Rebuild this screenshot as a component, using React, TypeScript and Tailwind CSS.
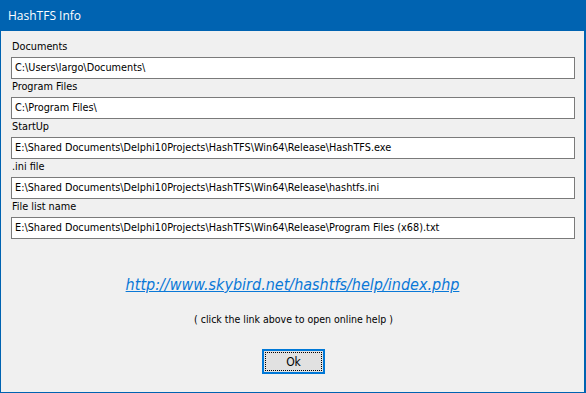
import React from 'react'

const fields = [
  { label: 'Documents', value: 'C:\\Users\\largo\\Documents\\' },
  { label: 'Program Files', value: 'C:\\Program Files\\' },
  { label: 'StartUp', value: 'E:\\Shared Documents\\Delphi10Projects\\HashTFS\\Win64\\Release\\HashTFS.exe' },
  { label: '.ini file', value: 'E:\\Shared Documents\\Delphi10Projects\\HashTFS\\Win64\\Release\\hashtfs.ini' },
  { label: 'File list name', value: 'E:\\Shared Documents\\Delphi10Projects\\HashTFS\\Win64\\Release\\Program Files (x68).txt' },
]

export default function App() {
  return (
    <div className="w-[586px] h-[393px] flex flex-col bg-[#0063b1] pl-px pr-[2px] pb-px font-['DejaVu_Sans_Condensed','DejaVu_Sans',sans-serif] text-black">
      <div className="h-[31px] shrink-0 flex items-center pl-[8px] -ml-px text-white text-[12px] font-['Open_Sans',sans-serif]">
        HashTFS Info
      </div>
      <div className="flex-1 bg-[#f0f0f0] flex flex-col px-[10px] pt-[8px]">
        {fields.map((f) => (
          <div key={f.label} className="flex flex-col">
            <div className="h-[15px] text-[10.8px] leading-[15px] pl-px">{f.label}</div>
            <div className="mt-[3px] h-[22px] w-[564px] border border-[#7a7a7a] bg-white flex items-center pl-[3px] text-[10.8px] whitespace-nowrap overflow-hidden">
              {f.value}
            </div>
          </div>
        ))}
        <div className="mt-[36px] flex justify-center">
          <a className="text-[16px] italic text-[#0a78d7] underline leading-[20px]">http://www.skybird.net/hashtfs/help/index.php</a>
        </div>
        <div className="mt-[17px] text-center text-[10.5px] leading-[15px] pl-[2px]">( click the link above to open online help )</div>
        <div className="mt-[22px] flex justify-center pl-[2px]">
          <button className="w-[63px] h-[25px] border-2 border-[#0078d7] bg-[#e1e1e1] p-px">
            <div className="w-full h-full border border-dotted border-black flex items-center justify-center text-[12px]">Ok</div>
          </button>
        </div>
      </div>
    </div>
  )
}
